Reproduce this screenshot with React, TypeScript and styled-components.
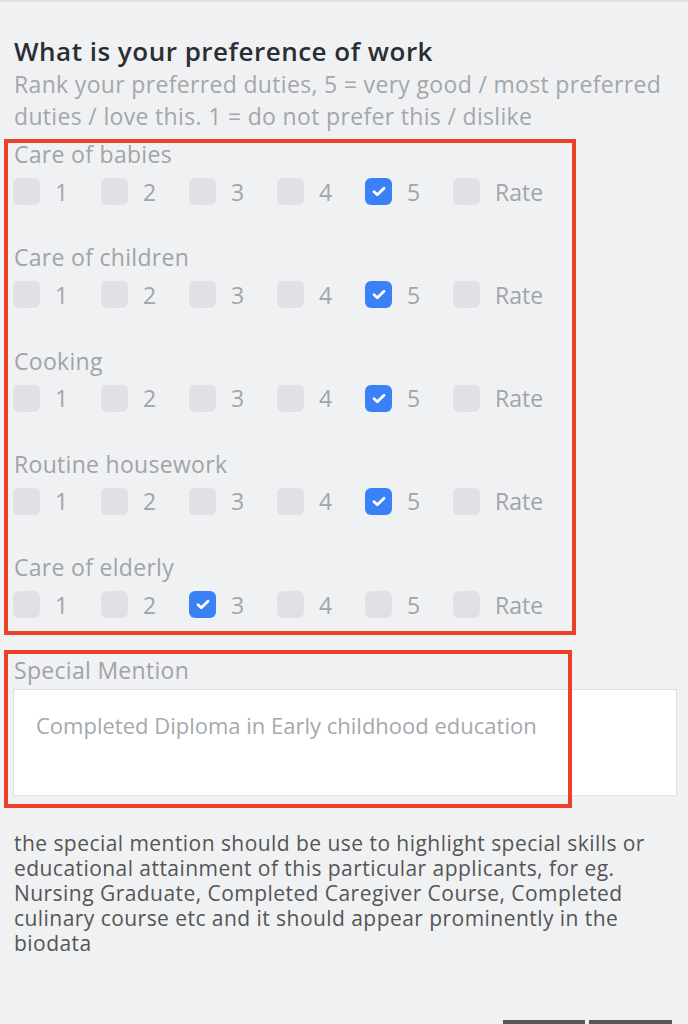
import React from "react";
import styled, { createGlobalStyle } from "styled-components";

const Global = createGlobalStyle`
  html, body { margin: 0; padding: 0; background: #f0f1f3; }
  body { font-family: "Open Sans", "Noto Sans", sans-serif; }
  * { box-sizing: border-box; }
`;

const Page = styled.div`
  border-top: 2px solid #e1e3e6;
  padding: 32px 0 0 14px;
  min-height: 1024px;
`;

const Title = styled.h1`
  margin: 0;
  font-size: 26px;
  line-height: 34px;
  font-weight: 600;
  letter-spacing: 0.5px;
  color: #2a2e33;
`;

const Subtitle = styled.p`
  margin: 0;
  width: 664px;
  font-size: 23px;
  line-height: 32px;
  letter-spacing: 0.33px;
  color: #a3a7ab;
`;

const Marked = styled.section<{ $w: number; $mt: number; $pt: number; $pb: number }>`
  outline: 4px solid #ea4227;
  margin: ${(p) => p.$mt}px 0 0 -6px;
  width: ${(p) => p.$w}px;
  padding: ${(p) => p.$pt}px 0 ${(p) => p.$pb}px 5px;
`;

const Groups = styled.div`
  display: flex;
  flex-direction: column;
  gap: 41.25px;
`;

const Group = styled.div`
  display: flex;
  flex-direction: column;
`;

const Label = styled.div`
  font-size: 23px;
  line-height: 22px;
  letter-spacing: 0.3px;
  color: #9fa4a9;
  padding-left: 1px;
  white-space: nowrap;
`;

const Options = styled.div`
  display: grid;
  grid-template-columns: repeat(6, 88px);
  margin-top: 13px;
`;

const Option = styled.label`
  display: flex;
  align-items: center;
  gap: 15px;
  height: 27px;
  font-size: 23px;
  color: #a0a5aa;
`;

const Box = styled.span<{ $on: boolean }>`
  width: 27px;
  height: 27px;
  border-radius: 6px;
  background: ${(p) => (p.$on ? "#3a80f6" : "#dfe1e5")};
  display: flex;
  align-items: center;
  justify-content: center;
  flex: none;
`;

const TextBox = styled.div`
  margin-top: 8px;
  width: 664px;
  height: 107px;
  background: #ffffff;
  border: 1px solid #dde2e6;
  padding: 21px 0 0 22px;
  font-size: 22px;
  line-height: 28px;
  color: #a4a9ad;
`;

const Help = styled.p`
  margin: 27px 0 0;
  width: 660px;
  font-size: 21px;
  line-height: 25px;
  letter-spacing: 0.45px;
  color: #555555;
`;

const Buttons = styled.div`
  display: flex;
  justify-content: flex-end;
  gap: 4px;
  margin: 64px 16px 0 0;
`;

const Btn = styled.div<{ $w: number }>`
  width: ${(p) => p.$w}px;
  height: 40px;
  background: #565656;
`;

const duties: { name: string; value: number }[] = [
  { name: "Care of babies", value: 5 },
  { name: "Care of children", value: 5 },
  { name: "Cooking", value: 5 },
  { name: "Routine housework", value: 5 },
  { name: "Care of elderly", value: 3 },
];

const opts = ["1", "2", "3", "4", "5", "Rate"];

const Check = () => (
  <svg width="14" height="11" viewBox="0 0 14 11">
    <path d="M2 5.8 L5.3 8.8 L12 2.3" fill="none" stroke="#fff" strokeWidth="2.8" strokeLinecap="round" strokeLinejoin="round" />
  </svg>
);

export default function App() {
  return (
    <>
      <Global />
      <Page>
        <Title>What is your preference of work</Title>
        <Subtitle>
          Rank your preferred duties, 5 = very good / most preferred duties / love this. 1 = do not prefer this / dislike
        </Subtitle>
        <Marked $w={564} $mt={11} $pt={0} $pb={13}>
          <Groups>
            {duties.map((d) => (
              <Group key={d.name}>
                <Label>{d.name}</Label>
                <Options>
                  {opts.map((o, i) => {
                    const on = i + 1 === d.value;
                    return (
                      <Option key={o}>
                        <Box $on={on}>{on && <Check />}</Box>
                        {o}
                      </Option>
                    );
                  })}
                </Options>
              </Group>
            ))}
          </Groups>
        </Marked>
        <Marked $w={560} $mt={23} $pt={5} $pb={8}>
          <Label>Special Mention</Label>
          <TextBox>Completed Diploma in Early childhood education</TextBox>
        </Marked>
        <Help>
          the special mention should be use to highlight special skills or educational attainment of this particular applicants, for eg. Nursing Graduate, Completed Caregiver Course, Completed culinary course etc and it should appear prominently in the biodata
        </Help>
        <Buttons>
          <Btn $w={82} />
          <Btn $w={83} />
        </Buttons>
      </Page>
    </>
  );
}
